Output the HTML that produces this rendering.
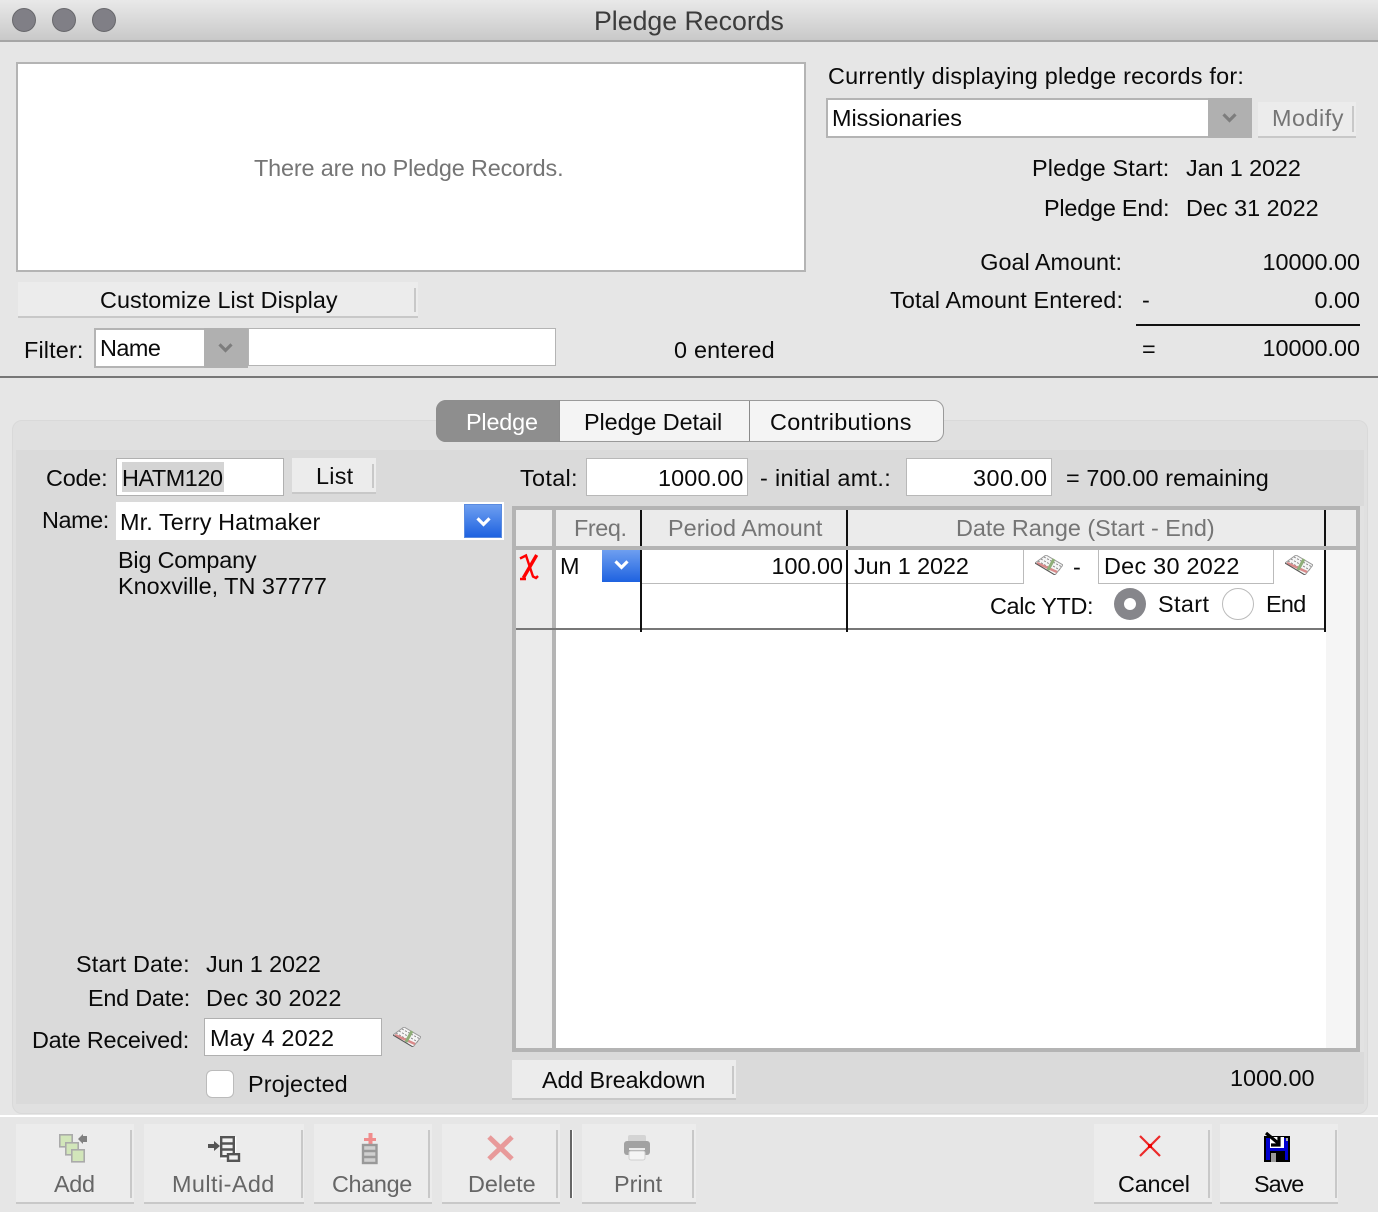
<!DOCTYPE html>
<html><head><meta charset="utf-8"><title>Pledge Records</title>
<style>
html,body{margin:0;padding:0;width:1378px;height:1212px;overflow:hidden;background:#e6e6e6}
body{position:relative;font-family:"Liberation Sans",sans-serif;color:#0a0a0a}
div,svg{position:absolute;box-sizing:border-box}
.t{white-space:nowrap;line-height:28px;font-size:23.4px}
.r{text-align:right}
.g{color:#757575}
.b{background:#ececec;border-bottom:2px solid #c8c8c8}
.s{width:2px;background:#c8c8c8}
.f{background:#fff;border:2px solid #b4b4b4}
.bb{background:linear-gradient(#6e9ff0,#1e62e0)}
</style></head><body>
<svg width="0" height="0" style="left:0;top:0"><defs>
<symbol id="cal" viewBox="0 0 28 20">
<path d="M0 8 11 0 28 10 20 20Z" fill="#f5f5f5" stroke="#999" stroke-width="1"/>
<path d="M3 6 22 17M6 4 25 15M9 2 27 12" stroke="#888" stroke-width="1" stroke-dasharray="2 1.5" fill="none"/>
<path d="M2 8 22 17" stroke="#d98a8a" stroke-width="2.4" fill="none"/>
<path d="M19 4 13 15" stroke="#8fae78" stroke-width="3" fill="none"/>
<path d="M0 8 20 20" stroke="#555" stroke-width="1" fill="none"/>
</symbol>
<symbol id="dn" viewBox="0 0 14 10"><path d="M2 2 7 7 12 2" fill="none" stroke="#fff" stroke-width="2.6"/></symbol>
<symbol id="dg" viewBox="0 0 14 10"><path d="M2 2 7 7 12 2" fill="none" stroke="#7d7d7d" stroke-width="2.6"/></symbol>
</defs></svg>

<!-- title bar -->
<div style="left:0;top:0;width:1378px;height:42px;background:linear-gradient(#e9e9e9,#c9c9c9);border-bottom:2px solid #a6a6a6"></div>
<div style="left:12px;top:8px;width:24px;height:24px;border-radius:50%;background:#807f86;border:1px solid #68686c"></div>
<div style="left:52px;top:8px;width:24px;height:24px;border-radius:50%;background:#807f86;border:1px solid #68686c"></div>
<div style="left:92px;top:8px;width:24px;height:24px;border-radius:50%;background:#807f86;border:1px solid #68686c"></div>
<div class="t" style="left:594px;top:6px;font-size:26.7px;line-height:30px;color:#3c3c3c">Pledge Records</div>

<!-- list -->
<div class="f" style="left:16px;top:62px;width:790px;height:210px"></div>
<div class="t g" style="left:254px;top:154px;letter-spacing:-.14px">There are no Pledge Records.</div>
<div class="b" style="left:18px;top:282px;width:400px;height:36px"></div>
<div class="s" style="left:414px;top:288px;height:24px"></div>
<div class="t" style="left:100px;top:286px;letter-spacing:.05px">Customize List Display</div>

<div class="t" style="left:24px;top:336px;letter-spacing:.15px">Filter:</div>
<div class="f" style="left:94px;top:328px;width:154px;height:40px"></div>
<div style="left:204px;top:328px;width:44px;height:40px;background:#b0b0b0"></div>
<svg style="left:217px;top:342px" width="17" height="12"><use href="#dg"/></svg>
<div class="t" style="left:100px;top:334px;letter-spacing:-.5px">Name</div>
<div class="f" style="left:248px;top:328px;width:308px;height:38px;border-width:1.5px"></div>

<!-- right top -->
<div class="t" style="left:828px;top:62px;letter-spacing:.23px">Currently displaying pledge records for:</div>
<div class="f" style="left:826px;top:98px;width:426px;height:40px"></div>
<div style="left:1208px;top:98px;width:44px;height:40px;background:#b0b0b0"></div>
<svg style="left:1221px;top:112px" width="17" height="12"><use href="#dg"/></svg>
<div class="t" style="left:832px;top:104px">Missionaries</div>
<div class="b" style="left:1258px;top:102px;width:98px;height:36px"></div>
<div class="s" style="left:1352px;top:106px;height:26px"></div>
<div class="t g" style="left:1272px;top:104px;letter-spacing:.5px">Modify</div>
<div class="t" style="left:1032px;top:154px;letter-spacing:.17px">Pledge Start:</div>
<div class="t" style="left:1186px;top:154px;letter-spacing:-.1px">Jan 1 2022</div>
<div class="t" style="left:1044px;top:194px;letter-spacing:-.2px">Pledge End:</div>
<div class="t" style="left:1186px;top:194px">Dec 31 2022</div>
<div class="t r" style="right:256px;top:248px">Goal Amount:</div>
<div class="t r" style="right:18px;top:248px">10000.00</div>
<div class="t" style="left:890px;top:286px;letter-spacing:.14px">Total Amount Entered:</div>
<div class="t" style="left:1142px;top:286px">-</div>
<div class="t r" style="right:18px;top:286px">0.00</div>
<div style="left:1136px;top:324px;width:224px;height:2px;background:#111"></div>
<div class="t" style="left:1142px;top:335px">=</div>
<div class="t r" style="right:18px;top:334px">10000.00</div>
<div class="t" style="left:674px;top:336px;letter-spacing:.22px">0 entered</div>
<div style="left:0;top:376px;width:1378px;height:2px;background:#777"></div>

<!-- tab panel -->
<div style="left:12px;top:420px;width:1356px;height:694px;background:#e0e0e0;border:1px solid #d9d9d9;border-radius:10px"></div>
<div style="left:16px;top:450px;width:1348px;height:654px;background:#dadada"></div>
<div style="left:436px;top:400px;width:508px;height:42px;background:#f4f4f4;border:1px solid #9a9a9a;border-radius:10px"></div>
<div style="left:436px;top:400px;width:124px;height:42px;background:#8e8e8e;border-radius:10px 0 0 10px;border-right:1px solid #8a8a8a"></div>
<div style="left:749px;top:401px;width:1px;height:40px;background:#8a8a8a"></div>
<div class="t" style="left:466px;top:408px;color:#fff;letter-spacing:-.17px">Pledge</div>
<div class="t" style="left:584px;top:408px;letter-spacing:-.08px">Pledge Detail</div>
<div class="t" style="left:770px;top:408px;letter-spacing:.3px">Contributions</div>

<!-- left form -->
<div class="t" style="left:46px;top:464px;letter-spacing:-.2px">Code:</div>
<div class="f" style="left:116px;top:458px;width:168px;height:38px;border-color:#b0b0b0;border-width:1.5px"></div>
<div style="left:122px;top:462px;width:102px;height:30px;background:#d4d4d4"></div>
<div class="t" style="left:122px;top:464px;letter-spacing:-.43px">HATM120</div>
<div class="b" style="left:292px;top:458px;width:84px;height:36px"></div>
<div class="s" style="left:372px;top:464px;height:24px"></div>
<div class="t" style="left:316px;top:462px;letter-spacing:.25px">List</div>
<div class="t" style="left:42px;top:506px;letter-spacing:-.4px">Name:</div>
<div style="left:116px;top:502px;width:388px;height:38px;background:#fff"></div>
<div class="bb" style="left:464px;top:504px;width:38px;height:34px;border:1px solid #5a8be0"></div>
<svg style="left:475px;top:516px" width="17" height="12"><use href="#dn"/></svg>
<div class="t" style="left:120px;top:508px;letter-spacing:.11px">Mr. Terry Hatmaker</div>
<div class="t" style="left:118px;top:546px;letter-spacing:-.18px">Big Company</div>
<div class="t" style="left:118px;top:572px">Knoxville, TN 37777</div>
<div class="t" style="left:76px;top:950px;letter-spacing:.18px">Start Date:</div>
<div class="t" style="left:206px;top:950px;letter-spacing:-.1px">Jun 1 2022</div>
<div class="t" style="left:88px;top:984px;letter-spacing:-.22px">End Date:</div>
<div class="t" style="left:206px;top:984px;letter-spacing:.27px">Dec 30 2022</div>
<div class="t" style="left:32px;top:1026px;letter-spacing:-.21px">Date Received:</div>
<div class="f" style="left:204px;top:1018px;width:178px;height:38px;border-color:#b0b0b0;border-width:1.5px"></div>
<div class="t" style="left:210px;top:1024px;letter-spacing:.2px">May 4 2022</div>
<svg style="left:393px;top:1027px" width="28" height="20"><use href="#cal"/></svg>
<div style="left:206px;top:1070px;width:28px;height:28px;background:#fff;border:1px solid #bbb;border-radius:6px"></div>
<div class="t" style="left:248px;top:1070px;letter-spacing:.11px">Projected</div>

<!-- totals -->
<div class="t" style="left:520px;top:464px;letter-spacing:.33px">Total:</div>
<div class="f" style="left:586px;top:458px;width:162px;height:38px;border-color:#b8b8b8;border-width:1.5px"></div>
<div class="t" style="left:658px;top:464px;letter-spacing:.14px">1000.00</div>
<div class="t" style="left:760px;top:464px;letter-spacing:.33px">- initial amt.:</div>
<div class="f" style="left:906px;top:458px;width:146px;height:38px;border-color:#b8b8b8;border-width:1.5px"></div>
<div class="t" style="left:973px;top:464px;letter-spacing:.5px">300.00</div>
<div class="t" style="left:1066px;top:464px;letter-spacing:.11px">= 700.00 remaining</div>

<!-- table -->
<div style="left:512px;top:506px;width:848px;height:546px;background:#b4b4b4"></div>
<div style="left:1360px;top:506px;width:4px;height:546px;background:#e2e2e2"></div>
<div style="left:516px;top:510px;width:840px;height:36px;background:#ebebeb"></div>
<div style="left:516px;top:550px;width:36px;height:498px;background:#ebebeb"></div>
<div style="left:516px;top:510px;width:36px;height:36px;background:#ebebeb"></div>
<div style="left:552px;top:510px;width:4px;height:36px;background:#b4b4b4"></div>
<div style="left:556px;top:550px;width:770px;height:498px;background:#fff"></div>
<div style="left:1326px;top:550px;width:30px;height:498px;background:#f5f5f5"></div>
<div style="left:516px;top:628px;width:810px;height:2px;background:#777"></div>
<div style="left:640px;top:510px;width:2px;height:122px;background:#111"></div>
<div style="left:846px;top:510px;width:2px;height:122px;background:#111"></div>
<div style="left:1324px;top:510px;width:2px;height:122px;background:#111"></div>
<div style="left:640px;top:546px;width:686px;height:4px;background:#b4b4b4"></div>
<div class="t g" style="left:574px;top:514px;letter-spacing:-.4px">Freq.</div>
<div class="t g" style="left:668px;top:514px;letter-spacing:.08px">Period Amount</div>
<div class="t g" style="left:956px;top:514px">Date Range (Start - End)</div>
<svg style="left:518px;top:552px" width="24" height="30" viewBox="0 0 24 30"><path d="M2 6.5 8 3.5 15 24.5 18 26 20 24M2 27H8" fill="none" stroke="#f00" stroke-width="2.4"/><path d="M18.7 3 5.3 26" fill="none" stroke="#f00" stroke-width="3.4"/></svg>
<div class="t" style="left:560px;top:552px">M</div>
<div class="bb" style="left:602px;top:550px;width:38px;height:32px"></div>
<svg style="left:613px;top:559px" width="17" height="12"><use href="#dn"/></svg>
<div style="left:642px;top:583px;width:204px;height:1px;background:#bbb"></div>
<div style="left:848px;top:583px;width:176px;height:1px;background:#bbb"></div>
<div style="left:1023px;top:550px;width:1px;height:34px;background:#bbb"></div>
<div style="left:1098px;top:550px;width:176px;height:34px;border:1px solid #bbb;border-top:0"></div>
<div class="t r" style="right:535px;top:552px">100.00</div>
<div class="t" style="left:854px;top:552px;letter-spacing:-.1px">Jun 1 2022</div>
<svg style="left:1035px;top:555px" width="28" height="20"><use href="#cal"/></svg>
<div class="t" style="left:1073px;top:553px">-</div>
<div class="t" style="left:1104px;top:552px;letter-spacing:.27px">Dec 30 2022</div>
<svg style="left:1285px;top:555px" width="28" height="20"><use href="#cal"/></svg>
<div class="t" style="left:990px;top:592px;letter-spacing:-.33px">Calc YTD:</div>
<div style="left:1114px;top:588px;width:32px;height:32px;border-radius:50%;background:#86868b"></div>
<div style="left:1124px;top:598px;width:12px;height:12px;border-radius:50%;background:#fff"></div>
<div class="t" style="left:1158px;top:590px;letter-spacing:.4px">Start</div>
<div style="left:1222px;top:588px;width:32px;height:32px;border-radius:50%;background:#fff;border:1px solid #bbb"></div>
<div class="t" style="left:1266px;top:590px;letter-spacing:-.67px">End</div>

<div class="b" style="left:512px;top:1060px;width:224px;height:40px"></div>
<div class="s" style="left:732px;top:1066px;height:28px"></div>
<div class="t" style="left:542px;top:1066px;letter-spacing:-.15px">Add Breakdown</div>
<div class="t" style="left:1230px;top:1064px">1000.00</div>

<!-- toolbar -->
<div style="left:0;top:1115px;width:1378px;height:2px;background:#fff"></div>
<div class="b" style="left:16px;top:1124px;width:118px;height:80px"></div><div class="s" style="left:130px;top:1130px;height:68px"></div>
<div class="b" style="left:144px;top:1124px;width:160px;height:80px"></div><div class="s" style="left:301px;top:1130px;height:68px"></div>
<div class="b" style="left:314px;top:1124px;width:118px;height:80px"></div><div class="s" style="left:428px;top:1130px;height:68px"></div>
<div class="b" style="left:442px;top:1124px;width:118px;height:80px"></div><div class="s" style="left:556px;top:1130px;height:68px"></div>
<div style="left:570px;top:1130px;width:2px;height:68px;background:#666"></div>
<div style="left:572px;top:1130px;width:1px;height:68px;background:#fff"></div>
<div class="b" style="left:582px;top:1124px;width:114px;height:80px"></div><div class="s" style="left:692px;top:1130px;height:68px"></div>
<div class="b" style="left:1094px;top:1124px;width:118px;height:80px"></div><div class="s" style="left:1208px;top:1130px;height:68px"></div>
<div class="b" style="left:1220px;top:1124px;width:118px;height:80px"></div><div class="s" style="left:1335px;top:1130px;height:68px"></div>

<svg style="left:56px;top:1132px" width="34" height="32" viewBox="0 0 34 32">
<g fill="#d2e6ba" stroke="#aaa" stroke-width="1.6"><rect x="3.8" y="2.8" width="12.4" height="12"/><rect x="9.8" y="10.8" width="12.4" height="12"/><rect x="15.8" y="17.8" width="12.4" height="12"/></g>
<path d="M22 7 27 2V4H31V10H27V12Z" fill="#808080"/></svg>
<svg style="left:206px;top:1134px" width="36" height="30" viewBox="0 0 36 30">
<rect x="16" y="4" width="13" height="20" fill="none" stroke="#fff" stroke-width="2.4"/>
<path d="M2 10H8V7L14 12 8 17V14H2Z" fill="#555"/>
<rect x="15.2" y="3.2" width="12.6" height="19" fill="#f2f2f2" stroke="#555" stroke-width="2.4"/><path d="M15 9.5H28M15 15.5H28" stroke="#555" stroke-width="2.4"/>
<rect x="22" y="20.2" width="11" height="6.6" fill="#f2f2f2" stroke="#555" stroke-width="2.4"/></svg>
<svg style="left:358px;top:1131px" width="24" height="34" viewBox="0 0 24 34">
<path d="M10.5 2H14.5V7H18V10H14.5V13H10.5V10H6V7H10.5Z" fill="#f08c8c"/>
<rect x="5" y="14" width="13.5" height="18" fill="#d0d0d0" stroke="#999" stroke-width="2.4"/><path d="M5 20H18M5 26H18" stroke="#999" stroke-width="2.4"/></svg>
<svg style="left:486px;top:1134px" width="30" height="28" viewBox="0 0 30 28"><path d="M3 3 26 25M26 3 3 25" stroke="#e89a9a" stroke-width="5" fill="none"/></svg>
<svg style="left:622px;top:1133px" width="30" height="30" viewBox="0 0 30 30">
<rect x="6" y="2" width="18" height="10" rx="2" fill="#d4d4d4"/><rect x="2" y="8" width="26" height="14" rx="3" fill="#a2a2a2"/><rect x="7" y="15" width="16" height="2" fill="#ececec"/><rect x="7" y="18" width="16" height="9" rx="2" fill="#f4f4f4" stroke="#d0d0d0"/></svg>
<svg style="left:1138px;top:1134px" width="24" height="24" viewBox="0 0 24 24"><path d="M2 2 22 22M22 2 2 22" stroke="#ec2a2a" stroke-width="2.2" fill="none"/><rect x="10" y="10" width="4" height="4" fill="#e00"/></svg>
<svg style="left:1263px;top:1132px" width="28" height="31" viewBox="0 0 28 31">
<path d="M1 4H27V30H1Z" fill="#000"/><path d="M3 6H25V28H3Z" fill="#0000d0"/>
<rect x="7" y="5" width="14" height="11" fill="#fff"/><rect x="7" y="19" width="15" height="11" fill="#000"/><rect x="8" y="21" width="5" height="9" fill="#999"/><rect x="23" y="6" width="2" height="3" fill="#aaa"/>
<path d="M3 1 15 11M16 5V13H8" fill="none" stroke="#000" stroke-width="3.2"/></svg>

<div class="t g" style="left:54px;top:1170px;color:#666;letter-spacing:-.33px">Add</div>
<div class="t g" style="left:172px;top:1170px;color:#666;letter-spacing:.44px">Multi-Add</div>
<div class="t g" style="left:332px;top:1170px;color:#666;letter-spacing:-.33px">Change</div>
<div class="t g" style="left:468px;top:1170px;color:#666">Delete</div>
<div class="t g" style="left:614px;top:1170px;color:#666">Print</div>
<div class="t" style="left:1118px;top:1170px;letter-spacing:-.17px">Cancel</div>
<div class="t" style="left:1254px;top:1170px;letter-spacing:-1px">Save</div>
</body></html>
